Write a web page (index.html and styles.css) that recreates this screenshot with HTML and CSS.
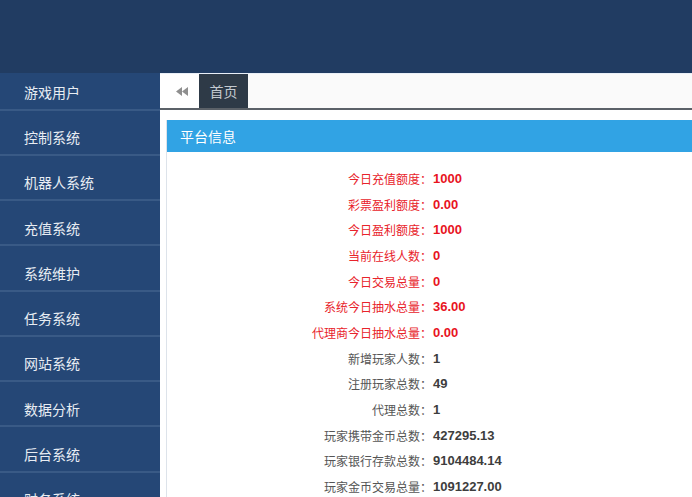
FILE: index.html
```html
<!DOCTYPE html>
<html lang="zh-CN">
<head>
<meta charset="utf-8">
<title>平台信息</title>
<link rel="stylesheet" href="styles.css">
</head>
<body>
<div class="header"></div>
<div class="main">
  <ul class="sidebar">
    <li class="nav-item">游戏用户</li>
    <li class="nav-item">控制系统</li>
    <li class="nav-item">机器人系统</li>
    <li class="nav-item">充值系统</li>
    <li class="nav-item">系统维护</li>
    <li class="nav-item">任务系统</li>
    <li class="nav-item">网站系统</li>
    <li class="nav-item">数据分析</li>
    <li class="nav-item">后台系统</li>
    <li class="nav-item">财务系统</li>
  </ul>
  <div class="content">
    <div class="tabbar">
      <div class="back">
        <svg width="12" height="9" viewBox="0 0 12 9"><polygon points="0,4.5 6,0 6,9" fill="#8f8f8f"/><polygon points="6,4.5 12,0 12,9" fill="#8f8f8f"/></svg>
      </div>
      <div class="tab">首页</div>
    </div>
    <div class="page">
      <div class="panel">
        <div class="panel-head">平台信息</div>
        <div class="panel-body">
          <div class="row red"><span class="label">今日充值额度：</span><span class="value">1000</span></div>
          <div class="row red"><span class="label">彩票盈利额度：</span><span class="value">0.00</span></div>
          <div class="row red"><span class="label">今日盈利额度：</span><span class="value">1000</span></div>
          <div class="row red"><span class="label">当前在线人数：</span><span class="value">0</span></div>
          <div class="row red"><span class="label">今日交易总量：</span><span class="value">0</span></div>
          <div class="row red"><span class="label">系统今日抽水总量：</span><span class="value">36.00</span></div>
          <div class="row red"><span class="label">代理商今日抽水总量：</span><span class="value">0.00</span></div>
          <div class="row"><span class="label">新增玩家人数：</span><span class="value">1</span></div>
          <div class="row"><span class="label">注册玩家总数：</span><span class="value">49</span></div>
          <div class="row"><span class="label">代理总数：</span><span class="value">1</span></div>
          <div class="row"><span class="label">玩家携带金币总数：</span><span class="value">427295.13</span></div>
          <div class="row"><span class="label">玩家银行存款总数：</span><span class="value">9104484.14</span></div>
          <div class="row"><span class="label">玩家金币交易总量：</span><span class="value">1091227.00</span></div>
        </div>
      </div>
    </div>
  </div>
</div>
</body>
</html>
```
FILE: styles.css
```css
html, body {
  margin: 0;
  padding: 0;
  height: 497px;
  overflow: hidden;
  background: #ffffff;
  font-family: "Noto Sans CJK SC", "Noto Sans", sans-serif;
}

.header {
  height: 73px;
  background: #213c62;
}

.main {
  display: flex;
  height: 424px;
}

.sidebar {
  width: 160px;
  flex: none;
  margin: 0;
  padding: 0;
  list-style: none;
  background: #254776;
  overflow: hidden;
}

.nav-item {
  box-sizing: border-box;
  height: 45.25px;
  padding: 16.5px 0 0 24px;
  border-bottom: 2px solid #395a86;
  color: #e8edf3;
  font-size: 14px;
  line-height: 20px;
}

.nav-item:first-child {
  height: 37.5px;
  padding-top: 9px;
}

.content {
  flex: 1;
  min-width: 0;
  display: flex;
  flex-direction: column;
  overflow: hidden;
}

.tabbar {
  flex: none;
  box-sizing: border-box;
  height: 37px;
  display: flex;
  background: #fafafa;
  border-top: 1px solid #e9eff7;
  border-bottom: 2px solid #5b6168;
}

.back {
  box-sizing: border-box;
  width: 39px;
  padding-left: 5px;
  background: #ffffff;
  display: flex;
  align-items: center;
  justify-content: center;
}

.tab {
  width: 49px;
  background: #2e3a47;
  color: #c3c9cf;
  font-size: 14px;
  display: flex;
  align-items: center;
  justify-content: center;
}

.page {
  flex: none;
  padding: 10px 0 0 6px;
}

.panel {
  border-left: 1px solid #dde3ea;
}

.panel-head {
  height: 32px;
  background: #31a3e4;
  color: #ffffff;
  font-size: 14px;
  line-height: 32px;
  padding-left: 13px;
}

.panel-body {
  padding-top: 14.2px;
}

.row {
  display: grid;
  grid-template-columns: 265px 1fr;
  height: 25.67px;
  align-items: center;
  color: #555555;
}

.row.red {
  color: #e8232b;
}

.label {
  text-align: right;
  font-size: 12px;
  line-height: 16px;
}

.value {
  padding-left: 1px;
  font-family: "Liberation Sans", Arial, sans-serif;
  font-weight: bold;
  font-size: 13px;
  line-height: 16px;
}

.row .value {
  color: #3d3d3d;
}

.row.red .value {
  color: #e8141e;
}
```
